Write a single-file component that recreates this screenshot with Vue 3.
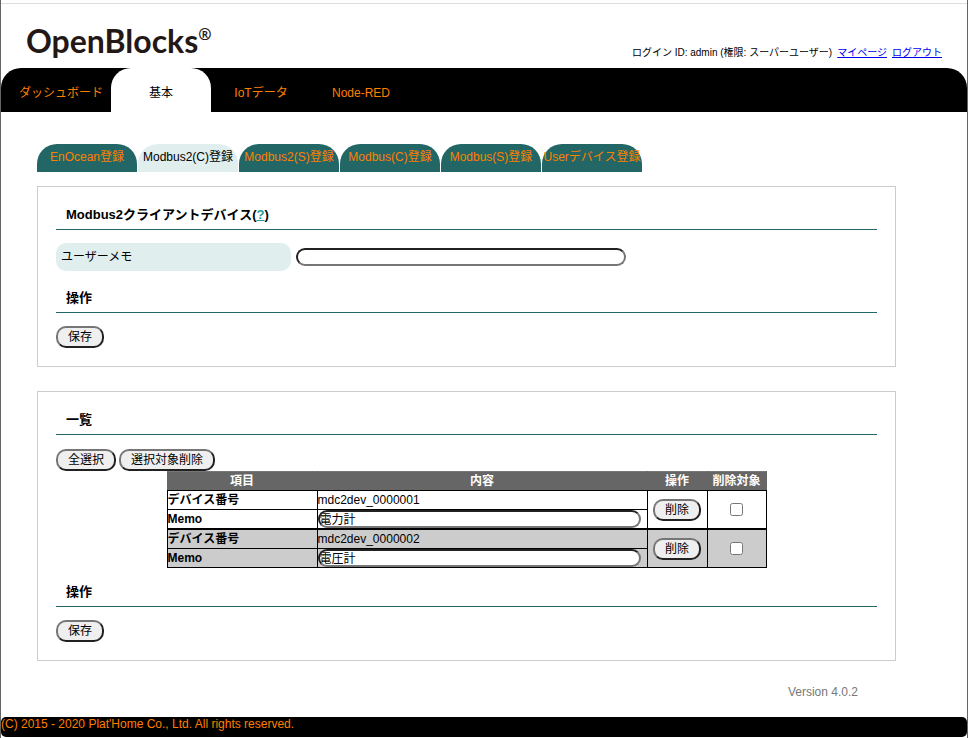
<script setup>
import { ref, reactive } from 'vue'

const navItems = ['ダッシュボード', '基本', 'IoTデータ', 'Node-RED']
const activeNav = ref('基本')

const tabs = [
  'EnOcean登録',
  'Modbus2(C)登録',
  'Modbus2(S)登録',
  'Modbus(C)登録',
  'Modbus(S)登録',
  'Userデバイス登録',
]
const activeTab = ref('Modbus2(C)登録')

const userMemo = ref('')
const devices = reactive([
  { id: 'mdc2dev_0000001', memo: '電力計', selected: false },
  { id: 'mdc2dev_0000002', memo: '電圧計', selected: false },
])

function selectAll() {
  devices.forEach((d) => (d.selected = true))
}
function remove(id) {
  const i = devices.findIndex((d) => d.id === id)
  if (i >= 0) devices.splice(i, 1)
}
function removeSelected() {
  devices.filter((d) => d.selected).forEach((d) => remove(d.id))
}
</script>

<template>
  <div class="page">
    <header class="header">
      <div class="logo">OpenBlocks<span class="reg">®</span></div>
      <div class="account">
        <span>ログイン ID: admin (権限: スーパーユーザー)</span>
        <a href="#">マイページ</a>
        <a href="#">ログアウト</a>
      </div>
    </header>

    <nav class="nav">
      <a
        v-for="item in navItems"
        :key="item"
        href="#"
        class="nav-item"
        :class="{ active: item === activeNav }"
        @click.prevent="activeNav = item"
      >{{ item }}</a>
    </nav>

    <main class="main">
      <nav class="tabs">
        <a
          v-for="tab in tabs"
          :key="tab"
          href="#"
          class="tab"
          :class="{ active: tab === activeTab }"
          @click.prevent="activeTab = tab"
        >{{ tab }}</a>
      </nav>

      <section class="panel">
        <h2>Modbus2クライアントデバイス(<a href="#" class="help">?</a>)</h2>
        <div class="field">
          <label for="user-memo">ユーザーメモ</label>
          <input id="user-memo" v-model="userMemo" type="text" class="text" />
        </div>
        <h2>操作</h2>
        <button type="button" class="btn">保存</button>
      </section>

      <section class="panel">
        <h2>一覧</h2>
        <div class="actions">
          <button type="button" class="btn" @click="selectAll">全選択</button>
          <button type="button" class="btn" @click="removeSelected">選択対象削除</button>
        </div>
        <table class="list">
          <colgroup>
            <col class="col-name" />
            <col class="col-value" />
            <col class="col-op" />
            <col class="col-select" />
          </colgroup>
          <thead>
            <tr>
              <th>項目</th>
              <th>内容</th>
              <th>操作</th>
              <th>削除対象</th>
            </tr>
          </thead>
          <tbody v-for="d in devices" :key="d.id">
            <tr>
              <th scope="row">デバイス番号</th>
              <td>{{ d.id }}</td>
              <td rowspan="2" class="center">
                <button type="button" class="btn" @click="remove(d.id)">削除</button>
              </td>
              <td rowspan="2" class="center">
                <input v-model="d.selected" type="checkbox" class="check" :aria-label="d.id" />
              </td>
            </tr>
            <tr>
              <th scope="row"><label :for="d.id">Memo</label></th>
              <td><input :id="d.id" v-model="d.memo" type="text" class="text" /></td>
            </tr>
          </tbody>
        </table>
        <h2>操作</h2>
        <button type="button" class="btn">保存</button>
      </section>

      <p class="version">Version 4.0.2</p>
    </main>

    <footer class="footer">(C) 2015 - 2020 Plat'Home Co., Ltd. All rights reserved.</footer>
  </div>
</template>

<style>
body {
  background: #fff;
}
</style>

<style scoped>
.page {
  box-sizing: border-box;
  min-height: 100vh;
  padding-top: 3px;
  border: solid #666;
  border-width: 0 1px;
  font-family: "Liberation Sans", "Noto Sans CJK JP", sans-serif;
  font-size: 12px;
  line-height: 18px;
  color: #000;
}
.header {
  display: flex;
  justify-content: space-between;
  align-items: flex-end;
  height: 64px;
  padding: 0 25px;
  border-top: 1px solid #ddd;
}
.logo {
  display: flex;
  align-items: flex-start;
  padding-bottom: 7px;
  font-family: Lato, "Open Sans", sans-serif;
  font-size: 32px;
  font-weight: 700;
  line-height: 40px;
  color: #231815;
}
.reg {
  font-family: "Open Sans", sans-serif;
  font-size: 16px;
  font-weight: 700;
  line-height: 26px;
}
.account {
  display: flex;
  gap: 5px;
  padding-bottom: 7px;
  font-size: 10px;
  line-height: 16px;
}
.account a {
  color: #00e;
}
.nav {
  display: flex;
  height: 44px;
  padding-left: 10px;
  background: #000;
  border-radius: 20px 20px 0 0;
}
.nav-item {
  width: 100px;
  border-radius: 20px 20px 0 0;
  color: #ff7f00;
  line-height: 50px;
  text-align: center;
  text-decoration: none;
}
.nav-item.active {
  background: #fff;
  color: #000;
}
.main {
  padding: 32px 71px 0 36px;
}
.tabs {
  display: flex;
  gap: 1px;
  margin-bottom: 14px;
}
.tab {
  width: 100px;
  height: 28px;
  border-radius: 20px 20px 0 0;
  background: #266;
  color: #ff7f00;
  line-height: 26px;
  text-align: center;
  text-decoration: none;
  white-space: nowrap;
}
.tab.active {
  background: #e0eeee;
  color: #000;
}
.panel {
  margin-bottom: 24px;
  padding: 17px 18px 18px;
  border: 1px solid #ccc;
}
h2 {
  margin: 0 0 13px;
  padding: 1px 10px 4px;
  border-bottom: 1px solid #266;
  font-size: 13px;
  font-weight: 700;
  line-height: 20px;
}
.help {
  color: #299;
}
.field {
  display: flex;
  align-items: center;
  gap: 5px;
  margin-bottom: 16px;
}
.field label {
  box-sizing: border-box;
  width: 235px;
  padding: 5px;
  border-radius: 10px;
  background: #e0eeee;
}
.text {
  display: block;
  box-sizing: border-box;
  height: 18px;
  margin: 0;
  padding: 0 0 2px;
  border: 2px solid;
  border-color: #212121 #767676 #767676 #212121;
  border-radius: 10px;
  background: #fff;
  color: #000;
  font: inherit;
  line-height: 14px;
}
.field .text {
  width: 330px;
}
.btn {
  display: block;
  box-sizing: border-box;
  height: 22px;
  margin: 0;
  padding: 0 10px;
  border: 2px solid;
  border-color: #767676 #212121 #212121 #767676;
  border-radius: 10px;
  background: #efefef;
  color: #000;
  font: inherit;
  line-height: 18px;
}
.actions {
  display: flex;
  gap: 3px;
  padding-top: 1px;
}
.list {
  width: 599px;
  margin: 0 auto 13px;
  border-collapse: collapse;
  table-layout: fixed;
}
.col-name {
  width: 150px;
}
.col-value {
  width: 330px;
}
.col-op {
  width: 60px;
}
.col-select {
  width: 59px;
}
.list th,
.list td {
  height: 18px;
  padding: 0;
  border: 1px solid #000;
  line-height: 18px;
  text-align: left;
}
.list thead th {
  border-color: #777 #666 #000;
  background: #666;
  color: #fff;
  text-align: center;
}
.list tbody + tbody {
  border-top: 2px solid #000;
}
.list tbody:nth-of-type(even) {
  background: #ccc;
}
.list td .text {
  width: 323px;
}
.center .btn,
.center .check {
  display: block;
  margin: 0 auto;
}
.check {
  width: 13px;
  height: 13px;
}
.version {
  margin: 0 38px 18px 0;
  color: #777;
  line-height: 14px;
  text-align: right;
}
.footer {
  height: 20px;
  margin-bottom: 1px;
  border-radius: 5px;
  background: #000;
  color: #ff7f00;
  line-height: 14px;
}
</style>
